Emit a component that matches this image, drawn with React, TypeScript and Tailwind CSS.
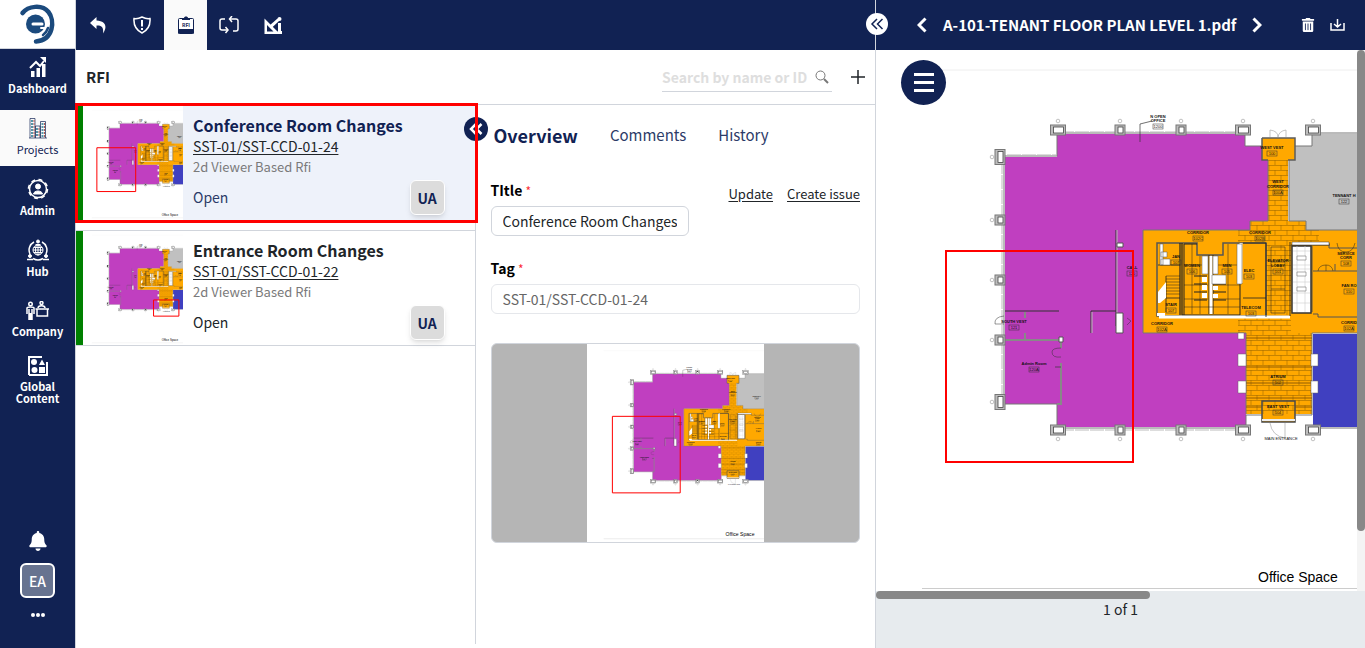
import type { ReactNode } from "react";
import { FaBell, FaTrashAlt } from "react-icons/fa";

type Mark = { x: number; y: number; w: number; h: number };

type Rfi = {
  id: string;
  title: string;
  type: string;
  status: string;
  owner: string;
  mark: Mark;
  active?: boolean;
};

const conferenceMark: Mark = { x: 946, y: 251, w: 187, h: 211 };
const entranceMark: Mark = { x: 1219, y: 382, w: 122, h: 78 };

const rfis: Rfi[] = [
  {
    id: "SST-01/SST-CCD-01-24",
    title: "Conference Room Changes",
    type: "2d Viewer Based Rfi",
    status: "Open",
    owner: "UA",
    mark: conferenceMark,
    active: true,
  },
  {
    id: "SST-01/SST-CCD-01-22",
    title: "Entrance Room Changes",
    type: "2d Viewer Based Rfi",
    status: "Open",
    owner: "UA",
    mark: entranceMark,
  },
];

/* ── ICONS ── */

function Logo() {
  return (
    <svg width="38" height="42" viewBox="18 2 38 42" fill="none" strokeLinecap="round">
      <circle cx="34.500" cy="23" r="9.500" fill="#1b4a7d" />
      <path d="M32 23H41" stroke="#fff" strokeWidth="3" />
      <path d="M40 27H45" stroke="#fff" strokeWidth="2" />
      <path d="M21.500 12C27 5 41 3 47.500 11C54 19 53 39 35 40.500" stroke="#1b4a7d" strokeWidth="4.500" />
      <path d="M33 34.500C39 36 43 33 45 30" stroke="#fff" strokeWidth="2.500" />
      <path d="M42 34C45 32 46 30 47 27" stroke="#1b4a7d" strokeWidth="2.500" />
    </svg>
  );
}

const DashboardIcon = () => (
  <svg width="20" height="22" viewBox="0 0 20 22" fill="currentColor">
    <path d="M3 15h3.500v6H3zM8.500 12H12v9H8.500zM14 8h3.500v13H14z" />
    <path d="M2 12l6-6 4 4 4-5" fill="none" stroke="currentColor" strokeWidth="2" />
    <path d="M12 1h6v6z" />
  </svg>
);

const ProjectsIcon = () => (
  <svg width="18" height="22" viewBox="0 0 18 22" fill="none" stroke="currentColor">
    <path d="M1 21V1.500H6V21M6.500 21V9H11V21M11.500 21V4.500H16.500V21M0 21H18" strokeWidth="0.700" />
    <path d="M3 3V20M8 11V20M13.500 6V20" strokeWidth="2" strokeDasharray="2 1" stroke="#5596a8" />
    <path d="M5 3V20M10 11V20M15.500 6V20" strokeDasharray="2 1" stroke="#b5584f" />
  </svg>
);

const AdminIcon = () => (
  <svg width="22" height="22" viewBox="0 0 22 22" fill="none" stroke="currentColor">
    <circle cx="11" cy="11" r="8.500" strokeWidth="1.500" />
    <circle cx="11" cy="11" r="9.500" strokeWidth="1.500" strokeDasharray="4 3.500" />
    <circle cx="11" cy="8.500" r="2.500" fill="currentColor" />
    <path d="M6.500 16C7 12 15 12 15.500 16Z" fill="currentColor" />
  </svg>
);

const HubIcon = () => (
  <svg width="22" height="22" viewBox="0 0 22 22" fill="none" stroke="currentColor">
    <circle cx="11" cy="11" r="5" />
    <path d="M6 11h10M11 6v10M7 8.500h8M7 13.500h8" />
    <ellipse cx="11" cy="11" rx="2.500" ry="5" />
    <path d="M7 3A9 9 0 0 0 3 15M15 3A9 9 0 0 1 19 15M6 19.500A10 10 0 0 0 16 19.500" strokeWidth="1.500" />
    <circle cx="11" cy="2.500" r="1.500" fill="currentColor" />
    <path d="M8.500 5.500h5" />
    <circle cx="3" cy="17" r="1.500" fill="currentColor" />
    <circle cx="19" cy="17" r="1.500" fill="currentColor" />
    <path d="M0 20.500h6M16 20.500h6" strokeWidth="1.500" />
  </svg>
);

const CompanyIcon = () => (
  <svg width="24" height="20" viewBox="0 0 24 20" fill="none" stroke="currentColor" strokeWidth="1.500">
    <circle cx="4.500" cy="3" r="1.750" />
    <path d="M1 13V7C1 5.500 8 5.500 8 7V13M3 8V19M6 8V19M4.500 12V19" />
    <circle cx="15.500" cy="2" r="1.500" />
    <path d="M12 7C12 4 19 4 19 7M9.500 8H23M11 8.500V15H21.500V8.500" />
  </svg>
);

const ContentIcon = () => (
  <svg width="20" height="20" viewBox="0 0 20 20" fill="currentColor">
    <path d="M1 19V1H14M19 6V19H1" fill="none" stroke="currentColor" strokeWidth="2" />
    <circle cx="6" cy="6" r="3" />
    <circle cx="6.500" cy="14" r="3" />
    <path d="M14 3.500L17 9H11zM11 11h6v6h-6z" />
  </svg>
);

const BackIcon = () => (
  <svg width="16" height="18" viewBox="0 0 16 18" fill="currentColor">
    <path d="M6.500 1L0 7L6.500 13V9.500C11 9 14 11 13 17.500C17.500 11 16 5 6.500 4.500Z" />
  </svg>
);

const ShieldIcon = () => (
  <svg width="18" height="18" viewBox="0 0 18 18" fill="none" stroke="currentColor" strokeWidth="1.500">
    <path d="M9 1C7 2 4 3 1 2.500C0.500 9 3 14 9 17C15 14 17.500 9 17 2.500C14 3 11 2 9 1Z" />
    <path d="M9 4V10.500M9 12V14" strokeWidth="2" />
  </svg>
);

const ClipboardIcon = () => (
  <svg width="16" height="18" viewBox="0 0 16 18">
    <rect x="0.500" y="2.500" width="15" height="15" rx="1" fill="#fff" stroke="#112253" />
    <path d="M4 4V2H6C6 0 10 0 10 2H12V4ZM0 13H16V17.500H0Z" fill="#112253" />
    <text x="8" y="10.500" textAnchor="middle" fontSize="5" fontWeight="700" fill="#112253">RFI</text>
  </svg>
);

const CycleIcon = () => (
  <svg width="20" height="18" viewBox="0 0 20 18" fill="none" stroke="currentColor" strokeWidth="1.500">
    <path d="M6 3H3Q1 3 1 5V12Q1 14 3 14H9M14 15H17Q19 15 19 13V5Q19 3 17 3H11" />
    <path d="M13 0L10.500 3L13 6M6.500 11L9 14L6.500 17" />
  </svg>
);

const DesignIcon = () => (
  <svg width="18" height="17" viewBox="0 0 18 17" fill="currentColor">
    <path fillRule="evenodd" d="M0.500 1.500L14 15V17H0.500ZM3 8V14.500H9.500Z" />
    <path d="M5 9L7 11.500L15.500 3.500L13.500 1.500Z" />
    <circle cx="15.500" cy="2" r="2" />
    <path d="M14 6H17V14H18V17H12L14 14Z" />
  </svg>
);

const Chevron = ({ flip }: { flip?: boolean }) => (
  <svg width="10" height="16" viewBox="0 0 10 16" fill="none" stroke="currentColor" strokeWidth="3">
    <path d={flip ? "M1.500 1.500L8 8L1.500 14.500" : "M8.500 1.500L2 8L8.500 14.500"} />
  </svg>
);

const DoubleChevron = ({ bold }: { bold?: boolean }) => (
  <svg width="14" height="12" viewBox="0 0 14 12" fill="none" stroke="currentColor" strokeWidth={bold ? 2.5 : 1.5}>
    <path d="M7 1L2 6L7 11M12.500 1L7.500 6L12.500 11" />
  </svg>
);

const DownloadIcon = () => (
  <svg width="15" height="12" viewBox="0 0 15 12" fill="none" stroke="currentColor" strokeWidth="1.500">
    <path d="M1 4V11H14V4M7.500 0V7.500M4 5L7.500 8L11 5" />
  </svg>
);

/* ── FLOOR PLAN ── */

// x, y, width, height
const columns = [
  [1000, 157, 10, 15], [1058, 130, 15, 10], [1120, 130, 10, 10], [1181, 130, 10, 10], [1243, 130, 15, 10], [1313, 130, 15, 10],
  [1000, 220, 10, 10], [1000, 280, 10, 10], [1000, 340, 10, 10], [1000, 402, 10, 15],
  [1058, 430, 15, 10], [1120, 430, 10, 10], [1181, 430, 10, 10], [1243, 430, 15, 10], [1313, 430, 15, 10],
];

const rooms: [number, number, string, string][] = [
  [1158, 118, "N OPEN", ""],
  [1158, 122, "OFFICE", "1200"],
  [1272, 149, "WEST VEST", "100"],
  [1278, 183, "WEST", ""],
  [1278, 188, "CORRIDOR", "100A"],
  [1344, 197, "TENNANT H", "122"],
  [1198, 234, "CORRIDOR", "102C"],
  [1260, 234, "CORRIDOR", "102B"],
  [1132, 269, "CALL", "120"],
  [1176, 258, "JAN", "107"],
  [1192, 267, "WOMEN", "106"],
  [1227, 267, "MEN", "105"],
  [1249, 272, "ELEC", "103"],
  [1278, 262, "ELEVATOR", ""],
  [1278, 267, "LOBBY", "101"],
  [1346, 255, "SERVICE", ""],
  [1346, 259, "CORR", "108"],
  [1349, 287, "FAN RO", "110"],
  [1171, 306, "STAIR", "107"],
  [1162, 325, "CORRIDOR", "102A"],
  [1251, 309, "TELECOM", "103"],
  [1349, 324, "CORRID", "102A"],
  [1014, 323, "SOUTH VEST", "121"],
  [1034, 365, "Admin Room", "120A"],
  [1278, 378, "ATRIUM", "102"],
  [1278, 408, "EAST VEST", "104"],
];

function FloorPlan({ mark, className, thin }: { mark: Mark; className: string; thin?: boolean }) {
  return (
    <svg className={className} viewBox="876 50 488 549" preserveAspectRatio="xMidYMid slice" role="img" aria-label="Tenant floor plan level 1">
      <defs>
        <pattern id="tiles" width="12" height="10" patternUnits="userSpaceOnUse">
          <path d="M0 0.500H12M3 0V5M9 5V10M0 5.500H12" stroke="#a06a00" strokeWidth="0.600" fill="none" />
        </pattern>
      </defs>
      <rect x="876" y="50" width="488" height="549" fill="#fff" />
      <path d="M922 70H1364" stroke="#eee" />
      <path d="M922 588.500H1364" stroke="#ccc" />

      {/* tenant areas */}
      <path d="M1057 134H1245V146H1268V221H1250V230H1143V333H1246V427H1057V404H1005V157H1057Z" fill="#c03fc0" />
      <path d="M1312 134H1364V230H1306V221H1289V146H1312Z" fill="#c0c0c0" />
      <path d="M1313 334H1364V427H1313Z" fill="#4040c0" />
      <path d="M1262 138H1295V160H1288V221H1306V230H1364V333H1312V414H1295V422H1262V414H1246V333H1143V230H1250V221H1268V160H1262Z" fill="#ffa800" />
      <path d="M1268 160H1288V221H1306V230H1319V242H1291V333H1319V333H1312V414H1246V333H1238V317H1266V242H1238V230H1250V221H1268Z" fill="url(#tiles)" />

      {/* outer walls */}
      <g fill="none" stroke="#777">
        <path d="M1057 156H1004V404H1057V428H1246V415H1262M1057 156V133H1245V146H1262M1364 133H1312V146H1295M1268 160V221H1250V230H1143V333H1246V414M1289 160V221H1306V230H1364M1295 415H1312V333H1364M1312 428H1364" />
        <path d="M1007 155H1057M1002 160V400M1060 132H1243M1060 430H1243" stroke="#bbb" strokeDasharray="14 1" />
        <path d="M1262 138V160H1268M1288 160H1295V138H1262" stroke="#5c5c5c" strokeWidth="1.500" />
        <path d="M1262 401H1295V422H1262Z" stroke="#4a4a4a" strokeWidth="1.500" />
        <path d="M1262 420H1295" stroke="#eee" strokeWidth="2" />
        <path d="M1270 137V130Q1278 131 1278 137Q1279 131 1286 130V137M1270 423Q1272 436 1285 438V423" stroke="#aaa" strokeWidth="0.700" />
      </g>

      {/* purple suite interior */}
      <g fill="none" stroke="#333">
        <path d="M1116 230V326M1005 311H1059M1091 333V311H1116" />
        <path d="M1117 230V326M1092 333V312" stroke="#bbb" />
        <path d="M1005 340H1061M1061 340V348M1061 363V404H1057M1025 312V318M1025 333V340" stroke="#888" strokeWidth="2" />
        <path d="M1055 367H1061M1140 142V124L1152 121" strokeWidth="0.700" />
        <path d="M1061 348Q1052 348 1052 352Q1052 358 1061 357M1004 316Q994 317 995 324H1004M1127 318L1131 321L1127 325" strokeWidth="0.500" />
      </g>
      <path d="M1116 313H1123V333H1116ZM1117 243H1123V247H1117ZM1059 337H1063V342H1059Z" fill="#fff" stroke="#555" />

      {/* core: stairs, washrooms, lifts */}
      <g fill="none" stroke="#222">
        <path d="M1157 243H1197V255H1223V243H1266V316H1157Z" stroke="#555" strokeWidth="1.500" />
        <path d="M1182 243V315M1180 243V315" strokeWidth="1.200" />
        <path d="M1184 315V244H1197M1209 255V314M1213 255V314M1240 244V315H1182" />
        <path d="M1211 256V314M1241 243V283M1159 317H1290" stroke="#fff" strokeWidth="3" />
        <path d="M1243 243H1266V317M1158 265H1180M1166 276V312M1158 298L1180 298M1243 298H1266M1290 242V316M1291 245H1330" strokeWidth="0.800" />
        <path d="M1184 265H1208M1184 285H1208M1184 299H1208M1214 265H1240M1214 285H1240M1214 299H1240M1192 244V314M1228 244V314M1200 256V314M1184 307H1240" strokeWidth="0.500" />
        <path d="M1166 276H1180M1166 279H1180M1166 282H1180M1166 285H1180M1166 288H1180M1166 291H1180M1166 294H1180" strokeWidth="0.500" />
        <path d="M1194 276H1207M1194 284H1207M1194 292H1207M1194 300H1207M1213 284H1226M1213 292H1226M1213 300H1226" strokeWidth="1.200" />
        <path d="M1312 246V312M1313 271H1335V264M1335 271H1364M1313 314H1318V317H1364M1329 243V248H1364" stroke="#555" />
        <path d="M1271 247H1285V313H1271ZM1271 262H1285M1271 289H1285M1318 271Q1319 265 1326 265V271M1326 265Q1332 265 1333 271M1337 243Q1338 252 1346 252Q1353 252 1355 243" strokeWidth="0.500" />
      </g>
      <g fill="#fff">
        <path d="M1160 244H1163V265H1160ZM1161 252H1167V257H1161ZM1161 259H1170V265H1161ZM1202 256H1208V274H1202ZM1213 256H1218V274H1213ZM1212 275H1226V284H1212ZM1237 244H1242V284H1237Z" stroke="#555" strokeWidth="0.500" />
        <path d="M1202 277H1207V282H1202ZM1202 285H1207V290H1202ZM1202 293H1207V298H1202ZM1213 286H1218V290H1213ZM1213 294H1218V298H1213ZM1158 292L1166 282V298L1160 303H1158ZM1157 313H1165V316H1157Z" />
        <path d="M1292 246H1311V313H1292Z" stroke="#333" strokeWidth="1.500" />
        <path d="M1292 245H1329V242H1292Z" stroke="#333" strokeWidth="0.500" />
      </g>
      <path d="M1293 251H1310M1293 265H1310M1293 269H1310M1293 282H1310M1293 293H1310M1293 303H1310M1297 246V312M1305 246V312" stroke="#ccc" strokeWidth="0.600" />
      <path d="M1297 256H1306V260H1297ZM1297 272H1306V276H1297ZM1297 287H1306V291H1297Z" fill="#fff" stroke="#777" strokeWidth="0.600" />

      {/* atrium */}
      <path d="M1246 338H1312M1246 367H1312M1246 383H1312M1246 398H1312M1246 407H1262M1295 407H1312" stroke="#7a4d00" strokeWidth="0.800" />
      <path d="M1238 333H1244V339H1238ZM1238 354H1246V366H1238ZM1238 381H1246V393H1238ZM1311 354H1318V366H1311ZM1311 381H1318V393H1311Z" fill="#fff" stroke="#666" strokeWidth="0.500" />

      {columns.map(([x, y, w, h]) => (
        <g key={`${x}-${y}`} fill="#fff">
          <rect x={x - w / 2} y={y - h / 2} width={w} height={h} fill="#bdbdbd" stroke="#777" />
          <rect x={x - w / 2 + 3} y={y - h / 2 + 2} width={w - 5} height={h - 4} stroke="#444" strokeWidth="0.800" />
          <circle cx={x < 1005 ? x - 8 : x} cy={x < 1005 ? y : y < 200 ? y - 9 : y + 9} r="1.800" stroke="#999" strokeWidth="0.600" />
        </g>
      ))}

      <g textAnchor="middle" fontSize="4" fontWeight="700" fill="#111" className="font-['Liberation_Sans',Arial,sans-serif]">
        {rooms.map(([x, y, name, no]) => (
          <g key={`${x}-${y}`}>
            <text x={x} y={y}>{name}</text>
            {no && (
              <>
                <rect x={x - 5} y={y + 2} width="10" height="5" fill="none" stroke="#333" strokeWidth="0.500" />
                <text x={x} y={y + 6} fontWeight="400">{no}</text>
              </>
            )}
          </g>
        ))}
        <text x="1281" y="440" fontWeight="400">MAIN ENTRANCE</text>
      </g>
      <text x="1258" y="582" fontSize="14" className="font-['Liberation_Sans',Arial,sans-serif]">Office Space</text>

      <rect x={mark.x} y={mark.y} width={mark.w} height={mark.h} fill="none" stroke="#f00" strokeWidth={thin ? 1 : 2} vectorEffect="non-scaling-stroke" />
    </svg>
  );
}

/* ── SIDEBAR ── */

const menu: { label: string; icon: ReactNode; active?: boolean }[] = [
  { label: "Dashboard", icon: <DashboardIcon /> },
  { label: "Projects", icon: <ProjectsIcon />, active: true },
  { label: "Admin", icon: <AdminIcon /> },
  { label: "Hub", icon: <HubIcon /> },
  { label: "Company", icon: <CompanyIcon /> },
  { label: "Global Content", icon: <ContentIcon /> },
];

function Sidebar() {
  return (
    <aside className="flex w-[76px] shrink-0 flex-col border-r border-gray-300 bg-[#112253] text-white">
      <a href="#home" aria-label="Home" className="flex h-[49px] shrink-0 items-center justify-center border-b border-gray-300 bg-white">
        <Logo />
      </a>
      <nav className="flex flex-col gap-[5px]">
        {menu.map((m) => (
          <a
            key={m.label}
            href={`#${m.label.toLowerCase()}`}
            className={`flex h-14 flex-col items-center justify-center gap-1 pb-1 text-center text-[11px] leading-3 ${
              m.active ? "bg-[#fafafa] text-[#112253]" : "font-bold"
            }`}
          >
            {m.icon}
            <span className="flex w-14 justify-center">{m.label}</span>
          </a>
        ))}
      </nav>
      <div className="mt-auto flex flex-col items-center gap-3 pb-7">
        <button type="button" aria-label="Notifications">
          <FaBell size={20} />
        </button>
        <button type="button" className="size-[35px] rounded-md border-2 border-white bg-[#677390] text-sm font-medium">
          EA
        </button>
        <button type="button" aria-label="More" className="flex h-2.5 items-center gap-px">
          <span className="size-1 rounded-full bg-white" />
          <span className="size-1 rounded-full bg-white" />
          <span className="size-1 rounded-full bg-white" />
        </button>
      </div>
    </aside>
  );
}

/* ── RFI LIST ── */

function RfiCard({ rfi }: { rfi: Rfi }) {
  return (
    <article className={`relative flex h-[116px] border-y border-gray-300 ${rfi.active ? "bg-[#eef2fa]" : "bg-white"}`}>
      <div className="w-[7px] shrink-0 bg-[#008000]" />
      <FloorPlan mark={rfi.mark} thin className="h-full w-[100px] shrink-0" />
      <div className="flex min-w-0 flex-1 flex-col pt-[7px] pl-[10px]">
        <h3 className={`text-base leading-6 font-bold ${rfi.active ? "text-[#112253]" : "text-[#212529]"}`}>{rfi.title}</h3>
        <a href="#rfi" className="w-fit text-sm leading-[18px] text-[#212529] underline underline-offset-2">
          {rfi.id}
        </a>
        <p className="text-[13px] leading-6 text-[#7a7a7a]">{rfi.type}</p>
        <p className={`mt-1 text-sm leading-7 ${rfi.active ? "text-[#2c3b68]" : "text-[#212529]"}`}>{rfi.status}</p>
      </div>
      <button
        type="button"
        className="mr-[30px] mb-[5px] size-[35px] shrink-0 self-end rounded-md border border-white bg-[#dcdcdc] text-sm font-bold text-[#112253] shadow-md"
      >
        {rfi.owner}
      </button>
      {rfi.active && <div className="pointer-events-none absolute -inset-y-[3px] -right-[3px] left-0 z-20 -ml-px border-3 border-[#f00]" />}
    </article>
  );
}

/* ── DETAIL ── */

function Overview() {
  return (
    <section className="relative min-w-0 px-[15px] pt-[14px]">
      <button
        type="button"
        aria-label="Collapse list"
        className="absolute top-3 -left-3 z-10 flex size-6 items-center justify-center rounded-full bg-[#112253] text-white"
      >
        <DoubleChevron bold />
      </button>
      <nav className="flex h-8 items-center gap-8 text-[15px] text-[#2c3b68]">
        <button type="button" className="pl-[3px] text-lg leading-6 font-bold text-[#112253]">Overview</button>
        <button type="button">Comments</button>
        <button type="button">History</button>
      </nav>

      <div className="mt-[25px] flex items-center justify-between text-[#212529]">
        <label htmlFor="title" className="text-sm leading-5 font-bold text-black">
          TItle <span className="text-xs font-normal text-red-500">*</span>
        </label>
        <div className="flex gap-[14px] pt-2 text-[13px] leading-5">
          <a href="#update" className="underline underline-offset-2">Update</a>
          <a href="#issue" className="underline underline-offset-2">Create issue</a>
        </div>
      </div>
      <input
        id="title"
        defaultValue="Conference Room Changes"
        className="mt-[2px] block h-[30px] w-[198px] rounded-md border border-gray-300 px-[11px] text-sm text-[#212529]"
      />

      <label htmlFor="tag" className="mt-[22px] block text-sm leading-5 font-bold text-black">
        Tag <span className="text-xs font-normal text-red-500">*</span>
      </label>
      <input
        id="tag"
        readOnly
        value="SST-01/SST-CCD-01-24"
        className="mt-[6px] block h-[30px] w-full rounded-md border border-gray-200 px-[11px] text-sm text-[#666]"
      />

      <div className="mt-[29px] flex h-[200px] justify-center overflow-hidden rounded-md border border-gray-300 bg-[#b5b5b5]">
        <FloorPlan mark={conferenceMark} thin className="h-full w-[177px]" />
      </div>
    </section>
  );
}

/* ── VIEWER ── */

function Viewer() {
  return (
    <section className="relative flex min-w-0 flex-col border-l border-gray-300 bg-[#e7ebee]">
      <header className="flex h-[50px] shrink-0 items-center bg-[#112253] pr-5 pl-[41px] text-white">
        <button type="button" aria-label="Previous sheet"><Chevron /></button>
        <h2 className="px-4 text-[15px] font-bold whitespace-nowrap">A-101-TENANT FLOOR PLAN LEVEL 1.pdf</h2>
        <button type="button" aria-label="Next sheet"><Chevron flip /></button>
        <div className="ml-auto flex items-center gap-[15px]">
          <button type="button" aria-label="Delete"><FaTrashAlt size={14} /></button>
          <button type="button" aria-label="Download"><DownloadIcon /></button>
        </div>
      </header>
      <button
        type="button"
        aria-label="Collapse viewer"
        className="absolute top-[13px] -left-[10px] z-10 flex size-[22px] items-center justify-center rounded-full bg-white text-[#112253]"
      >
        <DoubleChevron />
      </button>

      <div className="relative flex min-h-0 flex-1 bg-white">
        <div className="min-w-0 flex-1 overflow-hidden">
          <FloorPlan mark={conferenceMark} className="h-[549px] w-[488px] max-w-none" />
        </div>
        <div className="w-2 shrink-0 bg-[#f4f4f4]">
          <div className="h-[89%] rounded-full bg-[#888]" />
        </div>
        <button
          type="button"
          aria-label="Open tools"
          className="absolute top-[10px] left-[25px] flex size-[45px] flex-col items-center justify-center gap-[5px] rounded-full bg-[#112253]"
        >
          <span className="h-[3px] w-5 bg-white" />
          <span className="h-[3px] w-5 bg-white" />
          <span className="h-[3px] w-5 bg-white" />
        </button>
      </div>
      <div className="h-2 shrink-0 bg-[#e7ebee]">
        <div className="h-full w-[56%] rounded-full bg-[#888]" />
      </div>
      <footer className="h-[49px] shrink-0 text-center text-sm leading-5 text-[#212529]">1 of 1</footer>
    </section>
  );
}

export default function App() {
  return (
    <div className="flex h-screen overflow-hidden bg-white font-['Noto_Sans_CJK_JP',sans-serif]">
      <Sidebar />
      <main className="grid min-w-0 flex-1 grid-cols-[799fr_490fr] grid-rows-[minmax(0,1fr)]">
        <div className="flex min-w-0 flex-col">
          <nav className="flex h-[50px] shrink-0 bg-[#112253] text-white">
            <button type="button" aria-label="Back" className="flex w-11 items-center justify-center"><BackIcon /></button>
            <button type="button" aria-label="Issues" className="flex w-11 items-center justify-center"><ShieldIcon /></button>
            <button type="button" aria-label="RFI" className="flex w-[43px] items-center justify-center bg-[#fafafa]"><ClipboardIcon /></button>
            <button type="button" aria-label="Change orders" className="flex w-11 items-center justify-center"><CycleIcon /></button>
            <button type="button" aria-label="Design" className="flex w-11 items-center justify-center"><DesignIcon /></button>
          </nav>
          <header className="flex h-[55px] shrink-0 items-center border-b border-gray-300 px-[10px]">
            <h1 className="text-[15px] font-bold text-[#212529]">RFI</h1>
            <div className="ml-auto flex h-[30px] w-[170px] items-center border-b border-gray-300">
              <input
                aria-label="Search by name or ID"
                placeholder="Search by name or ID"
                className="min-w-0 flex-1 text-sm font-bold outline-none placeholder:text-[#dedede]"
              />
              <svg width="14" height="14" viewBox="0 0 14 14" fill="none" stroke="#777" className="mr-[3px] shrink-0">
                <circle cx="5.500" cy="5.500" r="4.500" />
                <path d="M9 9L13 13" strokeWidth="2" />
              </svg>
            </div>
            <button type="button" aria-label="Add RFI" className="ml-[19px]">
              <svg width="14" height="14" viewBox="0 0 14 14" stroke="#212529" strokeWidth="1.500">
                <path d="M7 0V14M0 7H14" />
              </svg>
            </button>
          </header>
          <div className="grid min-h-0 flex-1 grid-cols-2">
            <div className="mb-1 flex min-w-0 flex-col gap-[9px] border-r border-gray-300">
              {rfis.map((r) => (
                <RfiCard key={r.id} rfi={r} />
              ))}
            </div>
            <Overview />
          </div>
        </div>
        <Viewer />
      </main>
    </div>
  );
}
